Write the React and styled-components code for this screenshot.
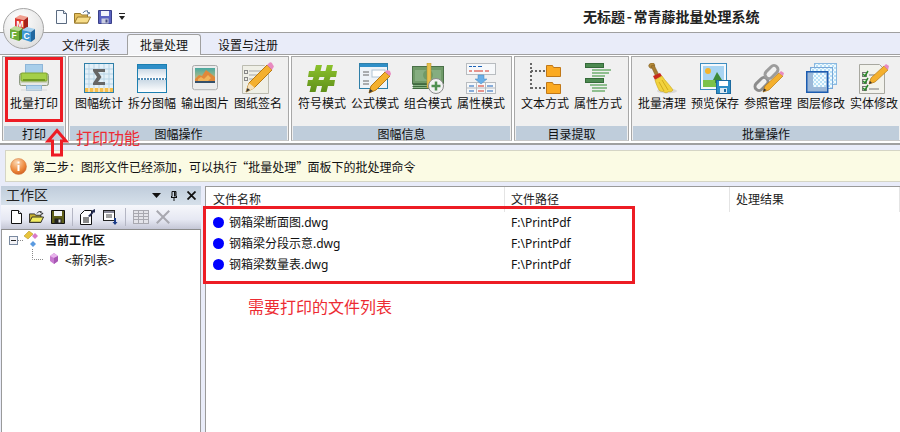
import React from "react";
import styled, { createGlobalStyle } from "styled-components";

const GlobalStyle = createGlobalStyle`
  html, body {
    margin: 0;
    padding: 0;
    width: 900px;
    height: 432px;
    overflow: hidden;
    background: #fff;
    font-family: "Noto Sans CJK SC", "Liberation Sans", sans-serif;
    font-size: 12px;
    color: #111;
  }
`;

const Page = styled.div`
  position: relative;
  width: 900px;
  height: 432px;
  overflow: hidden;
  display: flex;
  flex-direction: column;
`;

const TitleBar = styled.header`
  height: 32px;
  flex: none;
  display: flex;
  align-items: center;
  padding-left: 56px;
  background: #fff;
  border-bottom: 1px solid #a0a0a0;
`;

const QuickTools = styled.div`
  display: flex;
  align-items: center;
  gap: 7px;
  width: 527px;
  margin-top: 2px;
`;

const Title = styled.h1`
  margin: 0;
  font-size: 14px;
  line-height: 18px;
  font-weight: 700;
  white-space: pre;
  word-spacing: -1.5px;
  color: #222;
`;

const LogoWrap = styled.div`
  position: absolute;
  left: 3px;
  top: 8px;
  width: 41px;
  height: 41px;
`;

const TabStrip = styled.nav`
  height: 21px;
  flex: none;
  display: flex;
  align-items: flex-end;
  gap: 4px;
  padding-left: 49px;
  background: #e9ecf9;
  border-bottom: 1px solid #a0a0a0;
`;

const Tab = styled.div`
  padding: 0 12px;
  height: ${(p) => (p.$active ? "20px" : "19px")};
  display: flex;
  align-items: center;
  justify-content: center;
  margin-bottom: ${(p) => (p.$active ? "-1px" : "0")};
  background: ${(p) => (p.$active ? "#f4f5f8" : "transparent")};
  border: 1px solid ${(p) => (p.$active ? "#a0a0a0" : "transparent")};
  border-bottom: none;
  border-radius: 3px 3px 0 0;
  line-height: 16px;
  white-space: nowrap;
`;

const Ribbon = styled.section`
  flex: none;
  display: flex;
  gap: 2px;
  height: 90px;
  box-sizing: border-box;
  padding: 1px 0 0 2px;
  background: #fff;
  border-bottom: 2px solid #a0a0a0;
`;

const Group = styled.div`
  flex: none;
  width: ${(p) => p.$width}px;
  height: 85px;
  box-sizing: border-box;
  display: flex;
  flex-direction: column;
  background: #f0f0f0;
  border: 1px solid #a8a8a8;
  border-bottom-color: #c8c8c8;
`;

const GroupBody = styled.div`
  flex: 1;
  display: flex;
  gap: 5px;
  padding: 0 ${(p) => p.$pad}px;
`;

const GroupLabel = styled.div`
  height: 14px;
  margin: 0 1px;
  background: #bfcddb;
  text-align: center;
  line-height: 16px;
  font-size: 12px;
`;

const RibbonButton = styled.div`
  width: 48px;
  flex: none;
  display: flex;
  flex-direction: column;
  align-items: center;
`;

const IconSlot = styled.div`
  height: 34px;
  margin-top: 4px;
  display: flex;
  align-items: center;
  justify-content: center;
`;

const ButtonLabel = styled.span`
  display: block;
  white-space: nowrap;
  line-height: 16px;
`;

const Gap = styled.div`
  flex: none;
  height: ${(p) => p.$h}px;
  background: #e9ecf9;
`;

const NoticeRow = styled.div`
  flex: none;
  height: 32px;
  padding-left: 5px;
  background: #e9ecf9;
`;

const Notice = styled.div`
  height: 32px;
  box-sizing: border-box;
  display: flex;
  align-items: center;
  gap: 6px;
  padding-left: 4px;
  background: #fbfbe4;
  border: 1px solid #d5d5c5;
  border-right: none;
  white-space: pre;
  word-spacing: -3.5px;
`;

const Workspace = styled.main`
  flex: 1;
  display: flex;
  gap: 4px;
  min-height: 0;
  background: #e9ecf9;
`;

const SidePanel = styled.aside`
  width: 200px;
  margin-left: 1px;
  flex: none;
  display: flex;
  flex-direction: column;
  background: #fff;
`;

const PanelHeader = styled.div`
  height: 19px;
  box-sizing: border-box;
  flex: none;
  display: flex;
  align-items: center;
  justify-content: space-between;
  padding: 0 5px 3px;
  background: linear-gradient(#bfccdb, #d6e0ea);
  font-size: 14px;
  line-height: 16px;
  color: #222;
`;

const PanelButtons = styled.div`
  display: flex;
  align-items: center;
  gap: 10px;
  margin-top: 3px;
`;

const ToolBar = styled.div`
  height: 24px;
  flex: none;
  display: flex;
  align-items: center;
  gap: 7px;
  padding-left: 10px;
  background: linear-gradient(#f6f7fb, #e6e8f3 60%, #c5c7d6);
`;

const ToolDivider = styled.i`
  width: 1px;
  height: 18px;
  background: #b4b6c4;
`;

const Tree = styled.div`
  flex: 1;
  border: 1px solid #9a9a9a;
  border-top-color: #8c8c8c;
  border-bottom: none;
  background: #fff;
  padding: 0 0 0 7px;
`;

const TreeRow = styled.div`
  height: 20px;
  display: flex;
  align-items: center;
  gap: ${(p) => (p.$root ? "5px" : "6px")};
  padding-left: ${(p) => (p.$root ? "0" : "23px")};
  font-weight: ${(p) => (p.$root ? 700 : 400)};
  white-space: nowrap;
  &:first-child {
    margin-top: -1px;
  }
`;

const ListPanel = styled.section`
  flex: 1;
  background: #fff;
  border-left: 1px solid #9a9a9a;
  border-top: 1px solid #9a9a9a;
`;

const ListHeader = styled.div`
  height: 25px;
  display: grid;
  grid-template-columns: 299px 225px 1fr;
`;

const HeadCell = styled.div`
  padding-left: 6px;
  line-height: 24px;
  box-sizing: border-box;
  border-right: 1px solid #e4e4e4;
  color: #222;
  &:first-child {
    padding-left: 7px;
  }
`;

const ListRow = styled.div`
  height: 21px;
  display: grid;
  grid-template-columns: 299px 1fr;
  align-items: center;
`;

const NameCell = styled.div`
  display: flex;
  align-items: center;
  gap: 5px;
  padding-left: 7px;
  line-height: 16px;
  font-family: "Noto Sans", "Noto Sans CJK SC", sans-serif;
`;

const PathCell = styled.div`
  padding-left: 6px;
  line-height: 16px;
  font-family: "Noto Sans", "Noto Sans CJK SC", sans-serif;
`;

const Dot = styled.span`
  width: 11px;
  height: 11px;
  border-radius: 50%;
  background: #0000ff;
  flex: none;
`;

// red marks laid over the screenshot
const RedBox = styled.div`
  position: absolute;
  left: ${(p) => p.$x}px;
  top: ${(p) => p.$y}px;
  width: ${(p) => p.$w}px;
  height: ${(p) => p.$h}px;
  box-sizing: border-box;
  border: 3px solid #ed1c24;
`;

const RedNote = styled.div`
  position: absolute;
  left: ${(p) => p.$x}px;
  top: ${(p) => p.$y}px;
  color: #ed2b33;
  font-size: 16px;
  line-height: 20px;
  white-space: nowrap;
`;

const ArrowWrap = styled.div`
  position: absolute;
  left: 45px;
  top: 128px;
  width: 24px;
  height: 29px;
`;

/* ---------- icons ---------- */

const Cube = ({ x, y, front, side, top, letter }) => (
  <g transform={`translate(${x} ${y})`}>
    <path d="M0 3L5 0l8 2-4 3z" fill={top} />
    <path d="M0 3l9 2v10l-9-3z" fill={front} />
    <path d="M9 5l4-3v10l-4 3z" fill={side} />
    <text x="1.500" y="12" fontSize="8.500" fontWeight="700" fill="#fff" fontFamily="Liberation Sans">
      {letter}
    </text>
  </g>
);

const Logo = () => (
  <svg width="41" height="41" viewBox="0 0 41 41">
    <defs>
      <radialGradient id="lg" cx="40%" cy="30%" r="80%">
        <stop offset="0" stopColor="#ffffff" />
        <stop offset="1" stopColor="#dcdcdc" />
      </radialGradient>
    </defs>
    <circle cx="20.500" cy="20.500" r="20" fill="url(#lg)" stroke="#a5a5a5" />
    <Cube x={12} y={7} front="#dd3a2e" side="#a5231c" top="#f0a090" letter="M" />
    <Cube x={7} y={18} front="#6fae3a" side="#467f22" top="#bcdc96" letter="F" />
    <Cube x={19} y={19} front="#3f97d4" side="#22689f" top="#a4d0ee" letter="C" />
  </svg>
);

const NewDoc = ({ size = 14, dark }) => (
  <svg width={size - 3} height={size} viewBox="0 0 11 14">
    <path d="M.5.500h7l3 3v10H.500z" fill={dark ? "#fff" : "#f8fbff"} stroke={dark ? "#111" : "#5a6a80"} />
    <path d="M7.500.500v3h3" fill="#dde6f0" stroke={dark ? "#111" : "#5a6a80"} />
  </svg>
);

const OpenFolder = ({ w = 17, dark }) => (
  <svg width={w} height="14" viewBox="0 0 17 14">
    <path d="M.5 13V3.500h6l1 1.500h6v8z" fill={dark ? "#c8b030" : "#e5bf5c"} stroke={dark ? "#222" : "#9a7a2a"} />
    <path d="M.5 13l3-6h13l-3 6z" fill={dark ? "#f2ec60" : "#f7dd8a"} stroke={dark ? "#222" : "#9a7a2a"} />
    <path d="M9 3c1-2 3-2.500 5-2l-1 1 3 1-3 1.500" fill="none" stroke={dark ? "#222" : "#5b7595"} />
  </svg>
);

const Floppy = ({ dark }) => (
  <svg width="14" height="14" viewBox="0 0 14 14">
    <path d="M.5.500h13v13H.500z" fill={dark ? "#5f5f1c" : "#5a62c0"} stroke={dark ? "#111" : "#3a4088"} />
    <rect x="3" y="1" width="8" height="5" fill="#f2f4fa" />
    <rect x="3.500" y="8.500" width="7" height="5" fill={dark ? "#222" : "#c9cde0"} />
    <rect x="7.500" y="9.500" width="2" height="3" fill={dark ? "#ddd" : "#444a80"} />
  </svg>
);

const SmallDrop = () => (
  <svg width="6" height="8" viewBox="0 0 6 8">
    <rect x="0" y="0" width="6" height="1" fill="#222" />
    <path d="M0 3h6L3 7z" fill="#222" />
  </svg>
);

const Printer = () => (
  <svg width="30" height="28" viewBox="0 0 30 28">
    <rect x="6.500" y="0.500" width="17" height="10" fill="#a8ceea" stroke="#8fb6d8" />
    <rect x="0.500" y="9.500" width="29" height="12" rx="2" fill="#cdd3bd" stroke="#8d9a80" />
    <rect x="2" y="9" width="26" height="8" rx="1" fill="#a4cf48" stroke="#7ea42c" />
    <rect x="4" y="15" width="22" height="2" fill="#6f9a22" />
    <rect x="2" y="19" width="26" height="2" fill="#e8e8e8" />
    <rect x="7.500" y="21.500" width="15" height="5" fill="#b5d5ee" stroke="#8fb6d8" />
    <path d="M2 26h26" stroke="#d8d8d8" />
  </svg>
);

const SumTable = () => (
  <svg width="30" height="30" viewBox="0 0 30 30">
    <rect x="0.500" y="0.500" width="29" height="29" fill="#e4f0f8" stroke="#2f7fa8" />
    <path d="M5 1v28M10 1v28M15 1v28M20 1v28M25 1v28M1 6h28M1 11h28M1 16h28M1 21h28" stroke="#b8d4e6" />
    <rect x="1" y="25" width="28" height="4" fill="#f6c04e" />
    <path d="M5 25v4M10 25v4M15 25v4M20 25v4M25 25v4" stroke="#fff" />
    <path d="M9 6h12v3h-7l3.500 5-3.500 5h7v3H9v-2l4-6-4-6z" fill="#666" />
  </svg>
);

const SplitSheet = () => (
  <svg width="30" height="29" viewBox="0 0 30 29">
    <defs>
      <linearGradient id="sp1" x1="0" y1="0" x2="0" y2="1">
        <stop offset="0" stopColor="#cbd9e5" />
        <stop offset="1" stopColor="#ffffff" />
      </linearGradient>
    </defs>
    <rect x="0.500" y="0.500" width="29" height="28" fill="#fff" stroke="#1c7fb0" />
    <rect x="1" y="1" width="28" height="4" fill="#2f8fc8" />
    <rect x="1" y="5" width="28" height="10" fill="url(#sp1)" />
    <path d="M1 15h28" stroke="#1c6aa0" strokeWidth="1.500" strokeDasharray="2 1" />
    <rect x="1" y="16" width="28" height="12" fill="url(#sp1)" />
  </svg>
);

const PhotoOut = () => (
  <svg width="26" height="26" viewBox="0 0 26 26">
    <defs>
      <linearGradient id="sky" x1="0" y1="0" x2="0" y2="1">
        <stop offset="0" stopColor="#48a8a0" />
        <stop offset="1" stopColor="#e9c47a" />
      </linearGradient>
    </defs>
    <rect x="0.500" y="0.500" width="25" height="24" rx="2" fill="#ececec" stroke="#aaaaaa" />
    <rect x="3" y="3" width="20" height="15" fill="url(#sky)" />
    <path d="M3 14l4-4 3 1 4-6 4 3 5 4v6H3z" fill="#e0883a" />
    <path d="M6 14l3-2 3 2 4-4 3 3-4 4H6z" fill="#f0b45a" />
    <rect x="3" y="16" width="20" height="2" fill="#35506a" />
    <path d="M2 25h22" stroke="#d6d6d6" />
  </svg>
);

const SignPaper = () => (
  <svg width="32" height="32" viewBox="0 0 32 32">
    <path d="M.5 3.500h22l4 4v24H.5z" fill="#efefe6" stroke="#bcbcb0" />
    <path d="M7 9h14M7 13h12M7 17h8M7 21h6M7 25h6" stroke="#a5a5a5" />
    <rect x="2.500" y="8.500" width="3" height="3" fill="none" stroke="#888" />
    <rect x="2.500" y="15.500" width="3" height="3" fill="none" stroke="#888" />
    <path d="M4 30l3-9L25 3l5 5-18 18z" fill="#f4b02e" stroke="#b87a14" />
    <path d="M4 30l3-9 6 5z" fill="#f4e0b8" />
    <path d="M4 30l1.500-4 2.500 2z" fill="#333" />
    <path d="M25 3l2-2a2 2 0 0 1 3 0l1 2a2 2 0 0 1 0 3l-1 2z" fill="#e88ac0" />
  </svg>
);

const Hash = () => (
  <svg width="30" height="28" viewBox="0 0 30 28">
    <defs>
      <linearGradient id="hs" x1="0" y1="0" x2="0" y2="1">
        <stop offset="0" stopColor="#8cc22c" />
        <stop offset="1" stopColor="#5f8f1a" />
      </linearGradient>
    </defs>
    <path
      d="M9 1h6l-1.500 6h5L20 1h6l-1.500 6H30l-1 6h-5.500l-1 3H28l-1 6h-6l-1.500 6h-6L15 22h-5L8.500 28h-6L4 22H0l1-6h4.500l1-3H1l1-6h5.500zM12.500 13l-1 3h5l1-3z"
      fill="url(#hs)"
      fillRule="evenodd"
    />
  </svg>
);

const FormulaPen = () => (
  <svg width="32" height="31" viewBox="0 0 32 31">
    <rect x="0.500" y="0.500" width="28" height="25" fill="#eef3f8" stroke="#2f7fa8" />
    <rect x="1" y="1" width="27" height="3" fill="#2f8fc8" />
    <rect x="13" y="7" width="13" height="7" fill="#fff" stroke="#b0c4d4" />
    <path d="M4 9h6M4 12h6M4 18h6M4 21h6" stroke="#666" />
    <path d="M10 30l2-7L26 9l5 4-14 14z" fill="#f4b02e" stroke="#b87a14" />
    <path d="M10 30l1-4 3 2z" fill="#333" />
    <path d="M26 9l2-2 3 1 1 3-1 2z" fill="#e88ac0" />
  </svg>
);

const MoneyAdd = () => (
  <svg width="32" height="31" viewBox="0 0 32 31">
    <rect x="0.500" y="3.500" width="31" height="17" fill="#6f9a68" stroke="#4a7048" />
    <path d="M3 7h26v11H3z" fill="#85ad80" />
    <path d="M.5 21.500h30M.5 23.500h30M.5 25.500h26" stroke="#3f6a3e" />
    <path d="M1 22.500h30M1 24.500h28" stroke="#8ab486" />
    <ellipse cx="16" cy="12" rx="5" ry="5" fill="#6f9a68" />
    <rect x="15" y="0" width="4" height="25" fill="#e8c04c" stroke="#b08a24" strokeWidth=".5" />
    <circle cx="24" cy="23" r="7.500" fill="#f2f2f2" stroke="#8a8a8a" />
    <path d="M24 18.500v9M19.500 23h9" stroke="#4f9050" strokeWidth="2.500" />
  </svg>
);

const AttrTable = () => (
  <svg width="30" height="31" viewBox="0 0 30 31">
    <rect x="0.500" y="0.500" width="29" height="11" fill="#f6f8fa" stroke="#b8bcc0" />
    <path d="M3 3.500h3M7 3.500h3M12 3.500h4" stroke="#1c62b8" />
    <path d="M3 8h3M8 8h9M19 8h4" stroke="#d83020" />
    <rect x="0.500" y="19.500" width="29" height="11" fill="#f6f8fa" stroke="#b8bcc0" />
    <path d="M10.500 20v10M19.500 20v10M1 25h28" stroke="#b8bcc0" />
    <path d="M3 23h5M3 28h5M21 23h6M21 28h6" stroke="#1c62b8" />
    <path d="M12 23h6M12 28h6" stroke="#d83020" />
    <path d="M12 12h6v4h3l-6 5-6-5h3z" fill="#6ab0e8" stroke="#4a88c0" strokeWidth=".5" />
  </svg>
);

const TextTree = () => (
  <svg width="31" height="31" viewBox="0 0 31 31">
    <path d="M1 0v26M1 8h14M1 25h14" stroke="#666" strokeWidth="2" strokeDasharray="2 2" fill="none" />
    <path d="M16.500 2.500h6l1 2h7v9h-14z" fill="#fbaa22" stroke="#c07818" />
    <path d="M16.500 19.500h6l1 2h7v9h-14z" fill="#fbaa22" stroke="#c07818" />
  </svg>
);

const GreenList = () => (
  <svg width="26" height="31" viewBox="0 0 26 31">
    <g fill="#4c8a50" stroke="#356a3a">
      <rect x="0.500" y="0.500" width="18" height="4" />
      <rect x="0.500" y="15.500" width="18" height="4" />
    </g>
    <g fill="#8fbf8f">
      <rect x="7" y="6" width="19" height="2" />
      <rect x="7" y="9" width="17" height="2" />
      <rect x="7" y="12" width="13" height="2" />
      <rect x="5" y="21" width="17" height="2" />
      <rect x="7" y="24" width="15" height="2" />
      <rect x="7" y="27" width="13" height="2" />
    </g>
  </svg>
);

const Broom = () => (
  <svg width="30" height="31" viewBox="0 0 30 31">
    <ellipse cx="20" cy="28" rx="10" ry="2.500" fill="#d8d8d8" />
    <rect x="2" y="0" width="6" height="5" rx="2.500" transform="rotate(-25 5 3)" fill="#b48a3a" stroke="#7a5a20" strokeWidth=".5" />
    <path d="M4 3l3-1 5 10-3 2z" fill="#a87c30" stroke="#7a5a20" strokeWidth=".5" />
    <path d="M6 13l7-3 2 3-7 4z" fill="#c8281c" />
    <path d="M8 17l7-4c3 5 8 9 11 14-2 3-4 1-5 2s-3 1-4 0-4 0-5-2-3-6-4-10z" fill="#f2d23c" stroke="#c8a418" strokeWidth=".6" />
    <path d="M12 19l5 9M15 17l6 10" stroke="#d0ac1c" />
  </svg>
);

const PreviewSave = () => (
  <svg width="31" height="31" viewBox="0 0 31 31">
    <rect x="0.500" y="0.500" width="26" height="26" fill="#f4f8fc" stroke="#3f8ec0" />
    <rect x="3" y="3" width="21" height="21" fill="#a8d4f2" />
    <circle cx="8" cy="8" r="3" fill="#f4b42c" />
    <path d="M3 17h21v7H3z" fill="#7cc24a" />
    <path d="M17 9l5 8h-2v3h-5v-3h-2z" fill="#3d8a3a" />
    <rect x="16.500" y="17.500" width="14" height="13" fill="#2f8fc8" stroke="#1c6aa0" />
    <rect x="19" y="18" width="9" height="5" fill="#fff" />
    <rect x="20" y="25" width="7" height="5" fill="#dbe8f2" />
    <rect x="24" y="26" width="2" height="3" fill="#1c6aa0" />
  </svg>
);

const ChainPen = () => (
  <svg width="31" height="31" viewBox="0 0 31 31">
    <rect x="1" y="17" width="15" height="8" rx="4" transform="rotate(-45 8.500 21)" fill="none" stroke="#8c8c8c" strokeWidth="3" />
    <rect x="11" y="5" width="15" height="8" rx="4" transform="rotate(-45 18.500 9)" fill="none" stroke="#9c9c9c" strokeWidth="3" />
    <path d="M10 29l2-6L26 10l4 3-14 14z" fill="#f4b02e" stroke="#b87a14" strokeWidth=".7" />
    <path d="M10 29l1-3.500 2.500 1.500z" fill="#333" />
    <path d="M26 10l2-2 3 2-1 3z" fill="#e88ac0" />
  </svg>
);

const Layers = () => (
  <svg width="31" height="30" viewBox="0 0 31 30">
    <defs>
      <pattern id="chk" width="4" height="4" patternUnits="userSpaceOnUse">
        <rect width="4" height="4" fill="#f2fafe" />
        <rect width="2" height="2" fill="#b8e0f6" />
        <rect x="2" y="2" width="2" height="2" fill="#b8e0f6" />
      </pattern>
    </defs>
    <rect x="8.500" y="0.500" width="22" height="21" fill="url(#chk)" stroke="#8ab8e0" />
    <rect x="4.500" y="4.500" width="22" height="21" fill="url(#chk)" stroke="#7aa8d8" />
    <rect x="0.750" y="8.750" width="21" height="20.500" fill="#9cb8d8" stroke="#1c5cb0" strokeWidth="1.500" />
    <rect x="7" y="10" width="13" height="14" fill="url(#chk)" />
  </svg>
);

const CheckPen = () => (
  <svg width="31" height="31" viewBox="0 0 31 31">
    <path d="M.5 1.500h20l5 5v24H.5z" fill="#f2f2ec" stroke="#a8a8a0" />
    <g stroke="#777" fill="none">
      <rect x="3.500" y="9.500" width="4" height="4" />
      <rect x="3.500" y="16.500" width="4" height="4" />
      <rect x="3.500" y="23.500" width="4" height="4" />
      <path d="M10 12h6M10 19h5M10 26h10" />
    </g>
    <path d="M4 11l2 2 3-5M4 18l2 2 3-5M4 25l2 2 3-5" stroke="#2c8a2c" strokeWidth="1.500" fill="none" />
    <path d="M10 21l2-6L25 3l4 4-13 12z" fill="#f4b02e" stroke="#b87a14" strokeWidth=".7" />
    <path d="M10 21l1-3 2 2z" fill="#333" />
    <path d="M25 3l2-2 3 2-1 4z" fill="#e88ac0" />
  </svg>
);

const InfoBall = () => (
  <svg width="17" height="17" viewBox="0 0 17 17">
    <defs>
      <radialGradient id="ib" cx="40%" cy="25%" r="85%">
        <stop offset="0" stopColor="#fbd8b4" />
        <stop offset=".6" stopColor="#ee8a3c" />
        <stop offset="1" stopColor="#c8541a" />
      </radialGradient>
    </defs>
    <circle cx="8.500" cy="8.500" r="8" fill="url(#ib)" stroke="#d07a40" strokeWidth=".5" />
    <rect x="7.500" y="3.500" width="2" height="2" fill="#fff" />
    <rect x="7.500" y="7" width="2" height="6" fill="#fff" />
  </svg>
);

const PanelDrop = () => (
  <svg width="9" height="5" viewBox="0 0 9 5">
    <path d="M0 0h9L4.500 5z" fill="#111" />
  </svg>
);

const Pin = () => (
  <svg width="6" height="10" viewBox="0 0 6 10">
    <path d="M1 .5h4v5h1v1H0v-1h1zM3 6.500V10" fill="none" stroke="#111" />
    <rect x="3" y="1" width="1.500" height="4.500" fill="#111" />
  </svg>
);

const CloseX = ({ size = 9, color = "#111", width = 1.800 }) => (
  <svg width={size} height={size} viewBox="0 0 9 9">
    <path d="M.5.500l8 8M8.500.500l-8 8" stroke={color} strokeWidth={width} />
  </svg>
);

const Props = () => (
  <svg width="16" height="16" viewBox="0 0 16 16">
    <path d="M4.500 1.500h7v14h-11v-10z" fill="#fff" stroke="#111" />
    <path d="M3 9h6M3 11h6M3 13h6" stroke="#111" />
    <path d="M8 7l4-4-1-1 4-2v4l-1-1-4 5z" fill="#222a50" />
  </svg>
);

const ListDown = () => (
  <svg width="15" height="15" viewBox="0 0 15 15">
    <rect x="0.500" y="0.500" width="11" height="10" fill="#fff" stroke="#222" />
    <rect x="1" y="1" width="10" height="2" fill="#8a8a9a" />
    <path d="M3 5h6M3 7h6" stroke="#444" />
    <path d="M11 8v4H9.500l2.500 3 2.500-3H13V8z" fill="#1c3c88" />
  </svg>
);

const GridOff = () => (
  <svg width="16" height="14" viewBox="0 0 16 14">
    <rect x="0.500" y="0.500" width="15" height="13" fill="#e4e4ea" stroke="#a8a8b0" />
    <path d="M1 3.500h14M1 6.500h14M1 9.500h14M5.500 1v12M10.500 1v12" stroke="#a8a8b0" />
  </svg>
);

const TreeRootIcon = () => (
  <svg width="31" height="17" viewBox="0 0 31 17">
    <rect x="0.500" y="5.500" width="8" height="8" fill="#f2f2f6" stroke="#7a8aa0" />
    <path d="M2 9.500h5" stroke="#222" />
    <path d="M9 9.500h6" stroke="#888" strokeDasharray="1 1" />
    <path d="M15 5l5-5 4 3-5 5z" fill="#e8c43c" stroke="#a88a18" strokeWidth=".5" />
    <path d="M23 5l3-3 3 3-3 3z" fill="#d87ac8" />
    <path d="M21 13l3-3 3 3-3 3z" fill="#5a9ae0" />
  </svg>
);

const TreeChildIcon = () => (
  <svg width="27" height="20" viewBox="0 0 27 20">
    <path d="M.5 0v10.500h11" fill="none" stroke="#888" strokeDasharray="1 1" />
    <path d="M18 7l4-3 4 3v5l-4 3-4-3z" fill="#c87ad0" />
    <path d="M18 7l4 2 4-2-4-3z" fill="#e8b4ec" />
    <path d="M22 9v6l4-3V7z" fill="#a858b4" />
  </svg>
);

const HollowArrow = () => (
  <svg width="24" height="29" viewBox="0 0 24 29">
    <path d="M12 2.500L21 13h-4.500v14h-9V13H3z" fill="none" stroke="#ed1c24" strokeWidth="3" />
  </svg>
);

/* ---------- data ---------- */

const groups = [
  { label: "打印", width: 64, pad: 7, items: [["批量打印", Printer]] },
  {
    label: "图幅操作",
    width: 221,
    pad: 6,
    items: [
      ["图幅统计", SumTable],
      ["拆分图幅", SplitSheet],
      ["输出图片", PhotoOut],
      ["图纸签名", SignPaper],
    ],
  },
  {
    label: "图幅信息",
    width: 221,
    pad: 6,
    items: [
      ["符号模式", Hash],
      ["公式模式", FormulaPen],
      ["组合模式", MoneyAdd],
      ["属性模式", AttrTable],
    ],
  },
  {
    label: "目录提取",
    width: 115,
    pad: 6,
    items: [
      ["文本方式", TextTree],
      ["属性方式", GreenList],
    ],
  },
  {
    label: "批量操作",
    width: 270,
    pad: 6,
    items: [
      ["批量清理", Broom],
      ["预览保存", PreviewSave],
      ["参照管理", ChainPen],
      ["图层修改", Layers],
      ["实体修改", CheckPen],
    ],
  },
];

const files = ["钢箱梁断面图.dwg", "钢箱梁分段示意.dwg", "钢箱梁数量表.dwg"];

export default function App() {
  return (
    <Page>
      <GlobalStyle />
      <TitleBar>
        <QuickTools>
          <NewDoc />
          <OpenFolder />
          <Floppy />
          <SmallDrop />
        </QuickTools>
        <Title>无标题 - 常青藤批量处理系统</Title>
      </TitleBar>
      <LogoWrap>
        <Logo />
      </LogoWrap>

      <TabStrip>
        <Tab>文件列表</Tab>
        <Tab $active>批量处理</Tab>
        <Tab>设置与注册</Tab>
      </TabStrip>

      <Ribbon>
        {groups.map((g) => (
          <Group key={g.label} $width={g.width}>
            <GroupBody $pad={g.pad}>
              {g.items.map(([name, Icon]) => (
                <RibbonButton key={name}>
                  <IconSlot>
                    <Icon />
                  </IconSlot>
                  <ButtonLabel>{name}</ButtonLabel>
                </RibbonButton>
              ))}
            </GroupBody>
            <GroupLabel>{g.label}</GroupLabel>
          </Group>
        ))}
      </Ribbon>

      <Gap $h={5} />
      <NoticeRow>
        <Notice>
          <InfoBall />
          第二步：图形文件已经添加，可以执行 “批量处理” 面板下的批处理命令
        </Notice>
      </NoticeRow>
      <Gap $h={4} />

      <Workspace>
        <SidePanel>
          <PanelHeader>
            工作区
            <PanelButtons>
              <PanelDrop />
              <Pin />
              <CloseX />
            </PanelButtons>
          </PanelHeader>
          <ToolBar>
            <NewDoc dark />
            <OpenFolder dark w={15} />
            <Floppy dark />
            <ToolDivider />
            <Props />
            <ListDown />
            <ToolDivider />
            <GridOff />
            <CloseX size={14} color="#a8a8b0" width={1.300} />
          </ToolBar>
          <Tree>
            <TreeRow $root>
              <TreeRootIcon />
              当前工作区
            </TreeRow>
            <TreeRow>
              <TreeChildIcon />
              &lt;新列表&gt;
            </TreeRow>
          </Tree>
        </SidePanel>

        <ListPanel>
          <ListHeader>
            <HeadCell>文件名称</HeadCell>
            <HeadCell>文件路径</HeadCell>
            <HeadCell>处理结果</HeadCell>
          </ListHeader>
          {files.map((f) => (
            <ListRow key={f}>
              <NameCell>
                <Dot />
                {f}
              </NameCell>
              <PathCell>F:\PrintPdf</PathCell>
            </ListRow>
          ))}
        </ListPanel>
      </Workspace>

      <RedBox $x={5} $y={57} $w={58} $h={65} />
      <ArrowWrap>
        <HollowArrow />
      </ArrowWrap>
      <RedNote $x={76} $y={127}>打印功能</RedNote>
      <RedBox $x={203} $y={206} $w={432} $h={78} />
      <RedNote $x={248} $y={296}>需要打印的文件列表</RedNote>
    </Page>
  );
}
